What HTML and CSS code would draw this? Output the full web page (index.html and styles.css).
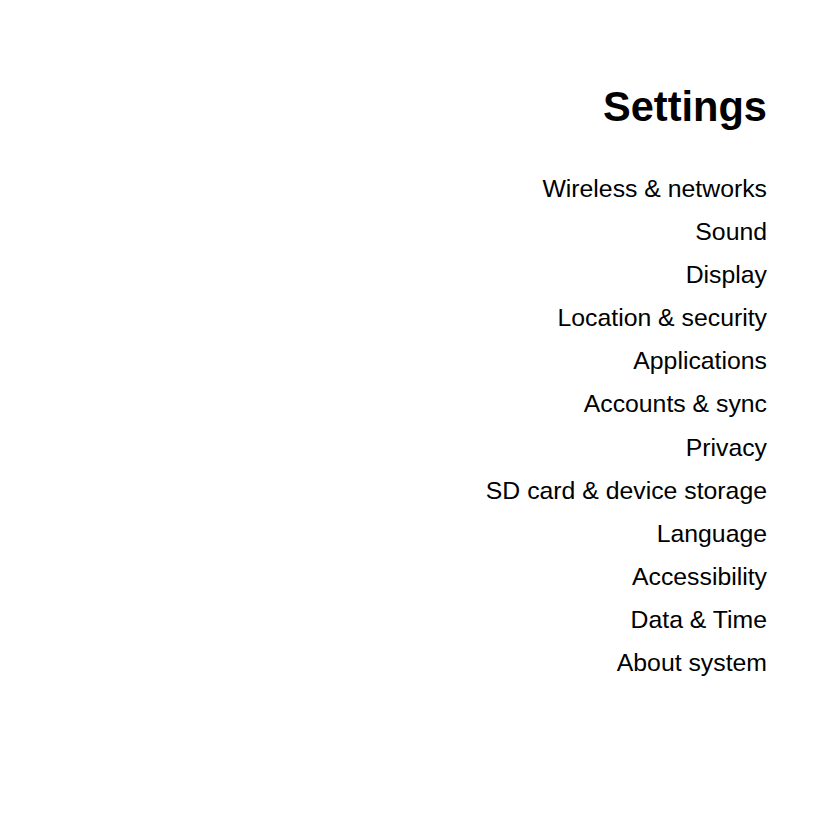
FILE: index.html
```html
<!DOCTYPE html>
<html lang="en">
<head>
    <meta charset="UTF-8">
    <title>Settings</title>
    <link rel="stylesheet" href="styles.css">
</head>
<body>
    <div class="settings">
        <h1 class="title">Settings</h1>
        <ul class="menu">
            <li>Wireless &amp; networks</li>
            <li>Sound</li>
            <li>Display</li>
            <li>Location &amp; security</li>
            <li>Applications</li>
            <li>Accounts &amp; sync</li>
            <li>Privacy</li>
            <li>SD card &amp; device storage</li>
            <li>Language</li>
            <li>Accessibility</li>
            <li>Data &amp; Time</li>
            <li>About system</li>
        </ul>
    </div>
</body>
</html>
```

FILE: styles.css
```css
body {
    margin: 0;
    background: #fff;
    color: #000;
    font-family: "Liberation Sans", Arial, sans-serif;
}

.settings {
    padding: 82px 60px 0 0;
    text-align: right;
}

.title {
    margin: 0;
    font-size: 41.6px;
    line-height: 50px;
    font-weight: bold;
}

.menu {
    list-style: none;
    margin: 0;
    padding: 0;
    padding-top: 35px;
    font-size: 24.8px;
    line-height: 43.1px;
}
```
